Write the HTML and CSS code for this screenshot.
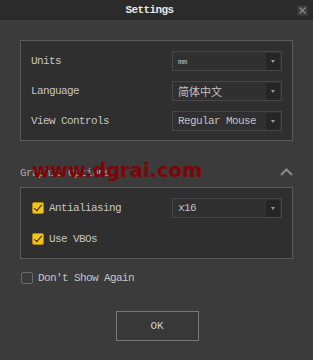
FILE: index.html
```html
<!DOCTYPE html>
<html lang="en">
<head>
    <meta charset="UTF-8">
    <title>Settings</title>
    <link rel="stylesheet" href="styles.css">
</head>
<body>
    <div class="window">
        <!-- title bar -->
        <div class="titlebar">
            <span class="title">Settings</span>
            <button class="close-btn" title="Close">
                <svg width="9" height="9" viewBox="0 0 9 9"><path d="M1.5 1.5L7.5 7.5M7.5 1.5L1.5 7.5" stroke="#8a8a8a" stroke-width="1.2"/></svg>
            </button>
        </div>

        <div class="content">
            <div class="group">
                <div class="row">
                    <span class="label">Units</span>
                    <div class="select"><span class="value small">mm</span><span class="arrow"></span></div>
                </div>
                <div class="row">
                    <span class="label">Language</span>
                    <div class="select"><span class="value cjk">简体中文</span><span class="arrow"></span></div>
                </div>
                <div class="row">
                    <span class="label">View Controls</span>
                    <div class="select"><span class="value">Regular Mouse</span><span class="arrow"></span></div>
                </div>
            </div>

            <div class="section-head">
                <span class="section-title">Graphic Options</span>
                <svg class="chevron" width="13" height="8" viewBox="0 0 13 8"><path d="M1 7L6.5 1.5L12 7" fill="none" stroke="#8a8a8a" stroke-width="2"/></svg>
            </div>

            <div class="group group-gfx">
                <div class="row">
                    <label class="check"><span class="box on"></span>Antialiasing</label>
                    <div class="select"><span class="value">x16</span><span class="arrow"></span></div>
                </div>
                <div class="row">
                    <label class="check"><span class="box on"></span>Use VBOs</label>
                </div>
            </div>

            <label class="check dont-show"><span class="box"></span>Don't Show Again</label>

            <div class="footer">
                <button class="ok-btn">OK</button>
            </div>
        </div>

        <!-- watermark over the dialog -->
        <div class="watermark">www.dgrai.com</div>
    </div>
</body>
</html>
```

FILE: styles.css
```css
body {
    margin: 0;
    background-color: #3b3b3b;
    color: #c8c8c8;
    font-family: "Liberation Mono", "Noto Sans CJK SC", monospace;
    font-size: 11px;
    letter-spacing: -0.6px;
}
.window {
    position: relative;
    width: 313px;
    height: 360px;
    background-color: #3b3b3b;
}
.titlebar {
    height: 20px;
    background-color: #2b2b2b;
    display: flex;
    align-items: center;
    position: relative;
}
.title {
    width: 299px;
    text-align: center;
    color: #e8e8e8;
    font-weight: bold;
}
.close-btn {
    width: 11px;
    height: 11px;
    margin-left: -2px;
    padding: 0;
    border: 1px solid #353535;
    background-color: #3e3e3e;
    display: flex;
    align-items: center;
    justify-content: center;
}
.content {
    padding: 20px 20px 0 20px;
}
.group {
    background-color: #2f2f2f;
    border: 1px solid #5a5a5a;
    padding: 10px 10px 9px 10px;
    display: flex;
    flex-direction: column;
    gap: 10px;
}
.row {
    height: 20px;
    display: flex;
    align-items: center;
    justify-content: space-between;
}
.label {
    color: #c4c4c4;
}
.select {
    width: 110px;
    height: 20px;
    box-sizing: border-box;
    border: 1px solid #474747;
    background-color: #303030;
    display: flex;
    align-items: center;
    justify-content: space-between;
    padding: 0 1px 0 5px;
}
.value {
    color: #c0c0c0;
}
.value.small {
    font-size: 8px;
    letter-spacing: -0.3px;
}
.value.cjk {
    font-family: "Noto Sans CJK SC", sans-serif;
    letter-spacing: 0;
    font-size: 11px;
}
.arrow {
    width: 14px;
    height: 17px;
    background-color: #252525;
    border-radius: 2px;
    position: relative;
}
.arrow::after {
    content: "";
    position: absolute;
    left: 5px;
    top: 7px;
    border-left: 2.5px solid transparent;
    border-right: 2.5px solid transparent;
    border-top: 3px solid #9a9a9a;
}
.section-head {
    margin-top: 22px;
    height: 20px;
    display: flex;
    align-items: center;
    justify-content: space-between;
    margin-bottom: 4px;
}
.section-title {
    color: #a8a8a8;
}
.chevron {
    margin-top: -2px;
}
.group-gfx {
    gap: 11px;
}
.check {
    display: flex;
    align-items: center;
    gap: 5px;
    color: #c4c4c4;
    padding-left: 1px;
}
.box {
    width: 12px;
    height: 12px;
    box-sizing: border-box;
    border: 1px solid #6a6a6a;
    border-radius: 2px;
    background-color: #3a3a3a;
    position: relative;
}
.box.on {
    background-color: #f2c318;
    border-color: #b08a10;
}
.box.on::after {
    content: "";
    position: absolute;
    left: 3px;
    top: 0px;
    width: 3px;
    height: 7px;
    border-right: 1.5px solid #2a2200;
    border-bottom: 1.5px solid #2a2200;
    transform: rotate(40deg);
}
.dont-show {
    margin-top: 9px;
    height: 20px;
}
.footer {
    display: flex;
    justify-content: center;
    margin-top: 23px;
}
.ok-btn {
    width: 83px;
    height: 30px;
    border: 1px solid #777;
    background-color: #383838;
    color: #d0d0d0;
    font-family: "Liberation Mono", monospace;
    font-size: 11px;
    margin-left: 1px;
}
.watermark {
    position: absolute;
    left: 32px;
    top: 161px;
    font-family: "DejaVu Sans", sans-serif;
    font-weight: bold;
    font-size: 19.5px;
    line-height: 20px;
    letter-spacing: 0;
    color: #7c0606;
}
```
